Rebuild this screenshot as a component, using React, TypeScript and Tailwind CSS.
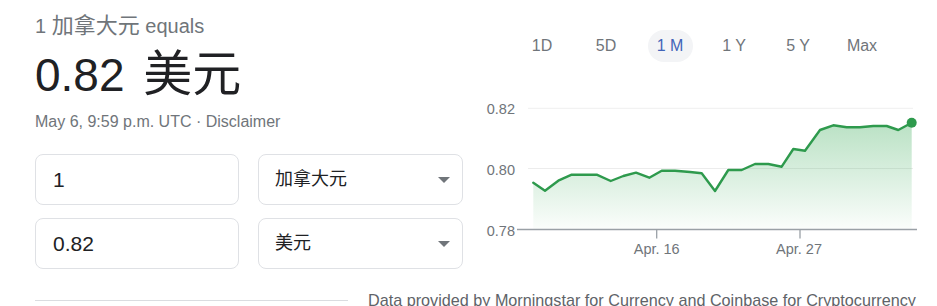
import React from "react";

const pts: [number, number][] = [
  [53.3, 92.7], [65, 100.7], [78.3, 90.7], [91.7, 84.7], [116.7, 84.7], [130.7, 91], [143.3, 86],
  [156, 82.7], [169.3, 87.7], [181.7, 80.7], [195, 80.7], [210, 82], [221.7, 83.3], [235, 101],
  [248.3, 80], [261.7, 80], [275, 74], [288.3, 74], [301.7, 76.7], [313.3, 59], [325, 60.7],
  [340, 40], [353.3, 35.3], [366.7, 37.3], [380, 37.3], [393.3, 36], [406.7, 36], [418.3, 40],
  [431.7, 32.7],
];

const linePath = pts.map((p, i) => `${i === 0 ? "M" : "L"}${p[0]},${p[1]}`).join(" ");
const fillPath = `${linePath} L431.7,139.5 L53.3,139.5 Z`;

const FONT = { fontFamily: '"Liberation Sans", Arial, "Noto Sans CJK SC", sans-serif' };

function Caret() {
  return (
    <svg width="12" height="6" viewBox="0 0 12 6" className="shrink-0">
      <path d="M0 0 L12 0 L6 6 Z" fill="#70757a" />
    </svg>
  );
}

export default function App() {
  const tabs = ["1D", "5D", "1 M", "1 Y", "5 Y", "Max"];
  return (
    <div className="w-[937px] h-[306px] overflow-hidden bg-white" style={FONT}>
      <div className="flex h-[268px]">
        <div className="w-[480px] shrink-0 pl-[35px] pt-[14px]">
          <div className="h-[24px] text-[20px] leading-[24px] text-[#70757a] whitespace-nowrap">
            1 <span className="text-[22px]">加拿大元</span> equals
          </div>
          <div className="mt-[10px] h-[52px] text-[46px] leading-[52px] text-[#202124] whitespace-nowrap">
            0.82<span className="ml-[5px] text-[49px]"> 美元</span>
          </div>
          <div className="mt-[12px] text-[16px] leading-[20px] text-[#70757a]">May 6, 9:59 p.m. UTC · Disclaimer</div>
          <div className="mt-[22px] grid grid-cols-[204px_205px] gap-x-[19px] gap-y-[13px]">
            <div className="h-[51px] rounded-[8px] border border-[#dfe1e5] flex items-center pl-[17px] text-[21px] text-[#202124]">1</div>
            <div className="h-[51px] rounded-[8px] border border-[#dfe1e5] flex items-center justify-between pl-[16px] pr-[12px] text-[18px] text-[#202124]">
              <span>加拿大元</span>
              <Caret />
            </div>
            <div className="h-[51px] rounded-[8px] border border-[#dfe1e5] flex items-center pl-[17px] text-[21px] text-[#202124]">0.82</div>
            <div className="h-[51px] rounded-[8px] border border-[#dfe1e5] flex items-center justify-between pl-[16px] pr-[12px] text-[18px] text-[#202124]">
              <span>美元</span>
              <Caret />
            </div>
          </div>
        </div>
        <div className="flex-1">
          <div className="flex pl-[30px] pt-[30px]">
            {tabs.map((t) => (
              <div key={t} className="w-[64px] flex justify-center">
                <div
                  className={
                    "w-[45px] h-[32px] rounded-[16px] flex items-center justify-center text-[16px] " +
                    (t === "1 M" ? "bg-[#f3f4f6] text-[#4264b8]" : "text-[#70757a]")
                  }
                >
                  {t}
                </div>
              </div>
            ))}
          </div>
          <svg width="457" height="176" viewBox="0 0 457 176" className="mt-[28px] block" style={FONT}>
            <defs>
              <linearGradient id="g" x1="0" y1="0" x2="0" y2="1">
                <stop offset="0" stopColor="#34a853" stopOpacity="0.34" />
                <stop offset="1" stopColor="#34a853" stopOpacity="0.02" />
              </linearGradient>
            </defs>
            <g fontSize="14.5" fill="#70757a">
              <text x="35" y="24" textAnchor="end">0.82</text>
              <text x="35" y="85" textAnchor="end">0.80</text>
              <text x="35" y="146" textAnchor="end">0.78</text>
              <text x="176.7" y="164" textAnchor="middle">Apr. 16</text>
              <text x="319" y="164" textAnchor="middle">Apr. 27</text>
            </g>
            <line x1="48" y1="18.3" x2="433" y2="18.3" stroke="#efefef" strokeWidth="1" />
            <line x1="48" y1="78.5" x2="433" y2="78.5" stroke="#ececec" strokeWidth="1" />
            <path d={fillPath} fill="url(#g)" />
            <line x1="37" y1="139.5" x2="437" y2="139.5" stroke="#9aa0a6" strokeWidth="1.3" />
            <line x1="176.7" y1="139.5" x2="176.7" y2="148.5" stroke="#9aa0a6" strokeWidth="1.3" />
            <line x1="320" y1="139.5" x2="320" y2="148.5" stroke="#9aa0a6" strokeWidth="1.3" />
            <path d={linePath} fill="none" stroke="#2e9a4d" strokeWidth="2.4" strokeLinejoin="round" strokeLinecap="round" />
            <circle cx="431.7" cy="32.7" r="5" fill="#2e9a4d" />
          </svg>
        </div>
      </div>
      <div className="flex items-center pl-[35px] mt-[23px]">
        <div className="w-[313px] h-[1px] bg-[#dadce0]" />
        <div className="ml-[20px] text-[16.2px] leading-[18px] text-[#5f6368] whitespace-nowrap">
          Data provided by Morningstar for Currency and Coinbase for Cryptocurrency
        </div>
      </div>
    </div>
  );
}
